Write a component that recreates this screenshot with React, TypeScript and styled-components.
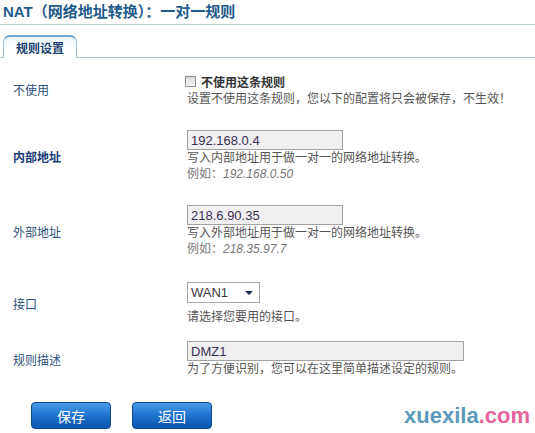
import React from 'react'
import styled, { createGlobalStyle } from 'styled-components'

const GlobalStyle = createGlobalStyle`
  html, body {
    margin: 0;
    padding: 0;
    background: #ffffff;
  }
  body {
    font-family: "Liberation Sans", "Noto Sans CJK SC", sans-serif;
    font-size: 12px;
    color: #555555;
  }
`

const Page = styled.div`
  width: 535px;
  height: 433px;
  overflow: hidden;
  display: flex;
  flex-direction: column;
`

const Title = styled.h1`
  margin: 0;
  padding: 2px 0 0 3px;
  height: 22px;
  font-size: 15px;
  font-weight: bold;
  color: #1e5a8c;
  line-height: 19px;
  border-bottom: 1px solid #b4d2d4;
`

const TabBar = styled.div`
  margin-top: 10px;
  padding-left: 3px;
  display: flex;
  align-items: flex-end;
  border-bottom: 1px solid #a9cdd6;
`

const Tab = styled.div`
  width: 74px;
  height: 23px;
  margin-bottom: -1px;
  box-sizing: border-box;
  border: 1px solid #9cc3d4;
  border-bottom: 1px solid #ffffff;
  border-top: 2px solid #6aa5cf;
  border-radius: 7px 7px 0 0;
  background: linear-gradient(#eef6fb, #ffffff 60%);
  display: flex;
  align-items: center;
  justify-content: center;
  font-size: 12px;
  font-weight: bold;
  color: #1b3f72;
`

const Form = styled.div`
  display: flex;
  flex-direction: column;
  padding-top: 13px;
`

const Row = styled.div<{ $gap: number }>`
  display: grid;
  grid-template-columns: 174px 1fr;
  align-items: center;
  margin-bottom: ${p => p.$gap}px;
`

const Label = styled.div<{ $strong?: boolean }>`
  padding-left: 13px;
  color: ${p => (p.$strong ? '#1b3a78' : '#2d4f78')};
  font-weight: ${p => (p.$strong ? 'bold' : 'normal')};
`

const Field = styled.div`
  display: flex;
  flex-direction: column;
  align-items: flex-start;
  padding-left: 13px;
`

const Note = styled.div`
  line-height: 16px;
  color: #555555;
`

const Example = styled.div`
  line-height: 16px;
  color: #777777;
  em {
    font-family: "Liberation Sans", sans-serif;
    font-style: italic;
  }
`

const CheckLine = styled.label`
  display: flex;
  align-items: center;
  gap: 5px;
  height: 20px;
  font-weight: bold;
  color: #333333;
  margin-left: -2px;
`

const Box = styled.span`
  width: 11px;
  height: 11px;
  border: 1px solid #8f8f8f;
  background: linear-gradient(#dcdcdc, #f4f4f4);
  box-sizing: border-box;
`

const TextBox = styled.div<{ $width: number }>`
  width: ${p => p.$width}px;
  height: 20px;
  box-sizing: border-box;
  border: 1px solid #a2a2a2;
  background: #f0f0f0;
  padding: 0 3px;
  display: flex;
  align-items: center;
  font-size: 13px;
  color: #3b2f55;
`

const Select = styled.div`
  width: 73px;
  height: 21px;
  box-sizing: border-box;
  border: 1px solid #a8a8a8;
  background: #ffffff;
  padding: 0 6px 0 3px;
  margin-bottom: 6px;
  display: flex;
  align-items: center;
  justify-content: space-between;
  font-size: 13px;
  color: #3a3a3a;
`

const Arrow = styled.span`
  width: 0;
  height: 0;
  border-left: 4px solid transparent;
  border-right: 4px solid transparent;
  border-top: 4px solid #1c2a5a;
`

const Footer = styled.div`
  display: flex;
  align-items: center;
  padding: 0 5px 0 31px;
  gap: 21px;
  margin-top: 25px;
`

const Button = styled.button`
  width: 80px;
  height: 27px;
  border: 1px solid #0c4a94;
  border-radius: 4px;
  background: linear-gradient(#4a9ae6, #1a6fcb 55%, #0c56b0);
  color: #ffffff;
  font-family: "Noto Sans CJK SC", sans-serif;
  font-size: 14px;
  padding: 0;
`

const Mark = styled.div`
  margin-left: auto;
  font-family: "Liberation Sans", sans-serif;
  font-weight: bold;
  font-size: 22px;
  color: #5c99bd;
  span {
    color: #e5649d;
  }
`

export default function App() {
  return (
    <Page>
      <GlobalStyle />
      <Title>NAT（网络地址转换）：一对一规则</Title>
      <TabBar>
        <Tab>规则设置</Tab>
      </TabBar>
      <Form>
        <Row $gap={23}>
          <Label>不使用</Label>
          <Field>
            <CheckLine>
              <Box />
              不使用这条规则
            </CheckLine>
            <Note>设置不使用这条规则，您以下的配置将只会被保存，不生效！</Note>
          </Field>
        </Row>
        <Row $gap={23}>
          <Label $strong>内部地址</Label>
          <Field>
            <TextBox $width={156}>192.168.0.4</TextBox>
            <Note>写入内部地址用于做一对一的网络地址转换。</Note>
            <Example>
              例如：<em>192.168.0.50</em>
            </Example>
          </Field>
        </Row>
        <Row $gap={25}>
          <Label>外部地址</Label>
          <Field>
            <TextBox $width={156}>218.6.90.35</TextBox>
            <Note>写入外部地址用于做一对一的网络地址转换。</Note>
            <Example>
              例如：<em>218.35.97.7</em>
            </Example>
          </Field>
        </Row>
        <Row $gap={16}>
          <Label>接口</Label>
          <Field>
            <Select>
              WAN1
              <Arrow />
            </Select>
            <Note>请选择您要用的接口。</Note>
          </Field>
        </Row>
        <Row $gap={0}>
          <Label>规则描述</Label>
          <Field>
            <TextBox $width={277}>DMZ1</TextBox>
            <Note>为了方便识别，您可以在这里简单描述设定的规则。</Note>
          </Field>
        </Row>
      </Form>
      <Footer>
        <Button>保存</Button>
        <Button>返回</Button>
        <Mark>
          xuexila<span>.com</span>
        </Mark>
      </Footer>
    </Page>
  )
}
